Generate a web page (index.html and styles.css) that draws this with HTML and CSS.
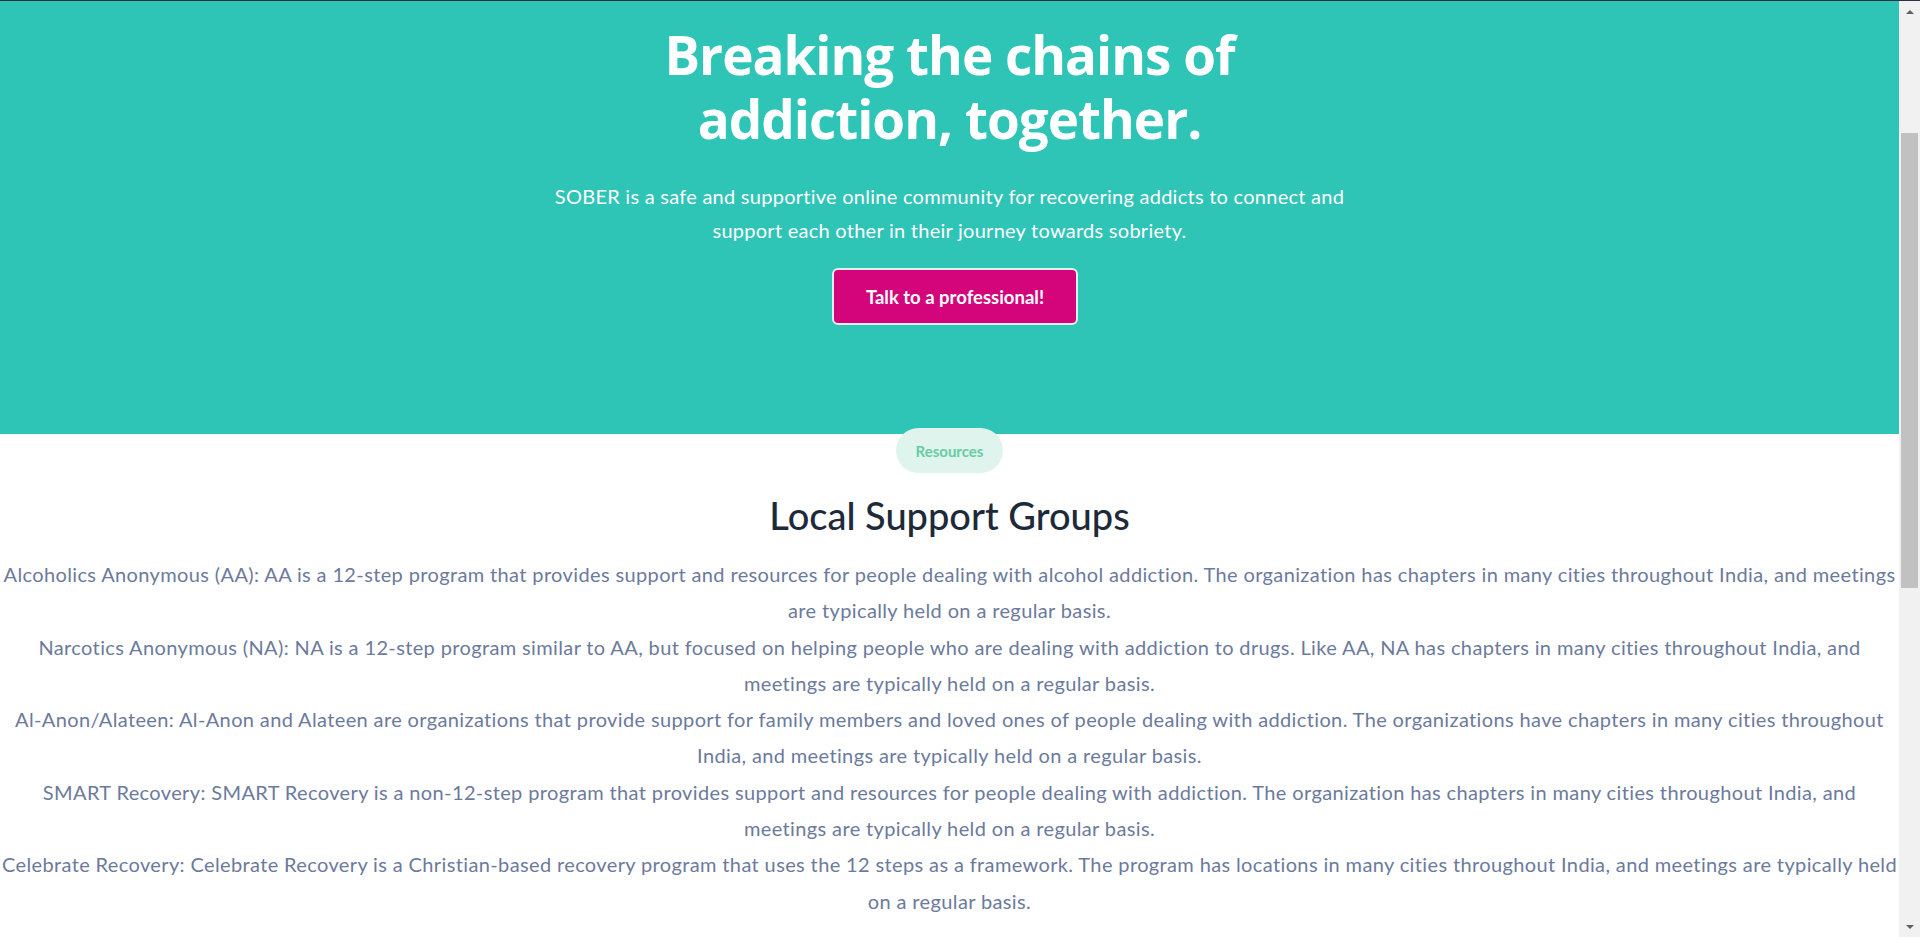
FILE: index.html
```html
<!DOCTYPE html>
<html lang="en">
<head>
<meta charset="utf-8">
<title>SOBER</title>
<link rel="stylesheet" href="styles.css">
</head>
<body>
<div class="top-line"></div>
<div class="window">
  <main class="page">
    <header class="hero">
      <div class="hero-inner">
        <h1 class="hero-title">Breaking the chains of addiction, together.</h1>
        <p class="hero-text">SOBER is a safe and supportive online community for recovering addicts to connect and support each other in their journey towards sobriety.</p>
        <a class="cta" href="#">Talk to a professional!</a>
      </div>
    </header>

    <section class="resources">
      <span class="pill">Resources</span>
      <h2 class="section-title">Local Support Groups</h2>
      <div class="groups">
        <p>Alcoholics Anonymous (AA): AA is a 12-step program that provides support and resources for people dealing with alcohol addiction. The organization has chapters in many cities throughout India, and meetings<br>are typically held on a regular basis.</p>
        <p>Narcotics Anonymous (NA): NA is a 12-step program similar to AA, but focused on helping people who are dealing with addiction to drugs. Like AA, NA has chapters in many cities throughout India, and<br>meetings are typically held on a regular basis.</p>
        <p>Al-Anon/Alateen: Al-Anon and Alateen are organizations that provide support for family members and loved ones of people dealing with addiction. The organizations have chapters in many cities throughout<br>India, and meetings are typically held on a regular basis.</p>
        <p>SMART Recovery: SMART Recovery is a non-12-step program that provides support and resources for people dealing with addiction. The organization has chapters in many cities throughout India, and<br>meetings are typically held on a regular basis.</p>
        <p>Celebrate Recovery: Celebrate Recovery is a Christian-based recovery program that uses the 12 steps as a framework. The program has locations in many cities throughout India, and meetings are typically held<br>on a regular basis.</p>
      </div>
    </section>
  </main>

  <aside class="scrollbar" aria-hidden="true">
    <div class="sb-btn"><span class="arrow-up"></span></div>
    <div class="sb-track"><div class="sb-thumb"></div></div>
    <div class="sb-btn"><span class="arrow-down"></span></div>
  </aside>
</div>
</body>
</html>
```

FILE: styles.css
```css
html, body {
  margin: 0;
  padding: 0;
}
body {
  font-family: Lato, "Noto Sans", sans-serif;
  background: #ffffff;
  height: 937px;
  overflow: hidden;
  display: flex;
  flex-direction: column;
}
.top-line {
  height: 1px;
  flex: none;
  background: #2c3040;
}
.window {
  flex: 1;
  display: flex;
  min-height: 0;
}
.page {
  flex: 1;
  min-width: 0;
}

/* hero */
.hero {
  background: #2ec4b6;
  color: #ffffff;
  text-align: center;
  padding: 22px 0 109px;
}
.hero-inner {
  max-width: 820px;
  margin: 0 auto;
  display: flex;
  flex-direction: column;
  align-items: center;
}
.hero-title {
  margin: 0;
  font-family: "Open Sans", Lato, sans-serif;
  font-size: 53px;
  line-height: 64px;
  font-weight: 700;
  letter-spacing: -1px;
}
.hero-text {
  margin: 28px 0 0;
  font-size: 20px;
  line-height: 34px;
  letter-spacing: 0.26px;
}
.cta {
  margin-top: 21px;
  margin-left: 11px;
  box-sizing: border-box;
  width: 246px;
  height: 57px;
  display: flex;
  align-items: center;
  justify-content: center;
  background: #d4047b;
  border: 2px solid #e2efee;
  border-radius: 6px;
  color: #ffffff;
  font-weight: 700;
  font-size: 18.5px;
  text-decoration: none;
}

/* resources */
.resources {
  display: flex;
  flex-direction: column;
  align-items: center;
  text-align: center;
}
.pill {
  margin-top: -6px;
  box-sizing: border-box;
  width: 107px;
  height: 45px;
  display: flex;
  align-items: center;
  justify-content: center;
  border-radius: 23px;
  background: #dff4ed;
  color: #68cca3;
  font-weight: 700;
  font-size: 15px;
}
.section-title {
  margin: 19px 0 0;
  font-size: 38px;
  line-height: 46px;
  font-weight: 500;
  color: #1e2a3a;
}
.groups {
  margin-top: 18px;
  width: 100%;
}
.groups p {
  margin: 0;
  font-size: 20px;
  line-height: 36.3px;
  letter-spacing: 0.37px;
  white-space: nowrap;
  color: #6c7a9c;
}

/* browser scrollbar as seen in the capture */
.scrollbar {
  width: 21px;
  flex: none;
  background: #f1f1f1;
  display: flex;
  flex-direction: column;
}
.sb-btn {
  height: 21px;
  flex: none;
  display: flex;
  align-items: center;
  justify-content: center;
}
.arrow-up,
.arrow-down {
  width: 0;
  height: 0;
  border-left: 4px solid transparent;
  border-right: 4px solid transparent;
}
.arrow-up {
  border-bottom: 4px solid #606060;
}
.arrow-down {
  border-top: 4px solid #606060;
}
.sb-track {
  flex: 1;
  padding: 0 2px;
}
.sb-thumb {
  margin-top: 111px;
  height: 455px;
  background: #c1c1c1;
}
```
